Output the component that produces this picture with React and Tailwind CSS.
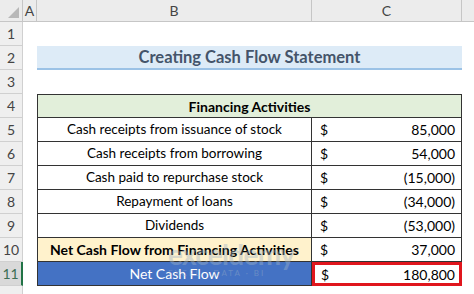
import React from 'react';

const rows = [
  { label: 'Cash receipts from issuance of stock', value: '85,000' },
  { label: 'Cash receipts from borrowing', value: '54,000' },
  { label: 'Cash paid to repurchase stock', value: '(15,000)' },
  { label: 'Repayment of loans', value: '(34,000)' },
  { label: 'Dividends', value: '(53,000)' },
];

const RowHead = ({ n, active }) => (
  <div
    className={`flex items-center justify-center border-b border-r border-[#d0d0d0] text-[14px] ${
      active ? 'bg-[#d9d9d9] text-[#3d6f54] border-r-2 border-r-[#217346]' : 'bg-[#efefef] text-[#444]'
    }`}
  >
    {n}
  </div>
);

const Blank = () => <div className="bg-white" />;

const App = () => {
  return (
    <div
      className="w-[474px] h-[294px] overflow-hidden bg-white relative"
      style={{ fontFamily: 'Lato, "Open Sans", sans-serif' }}
    >
      <div className="grid grid-cols-[23px_14px_275px_150px_1fr] grid-rows-[22px_repeat(11,24px)_1fr] h-full">
        {/* column headers */}
        <div className="bg-[#ececec] border-b border-r border-[#c6c6c6] relative">
          <svg className="absolute right-[3px] bottom-[3px]" width="11" height="11" viewBox="0 0 11 11">
            <polygon points="11,0 11,11 0,11" fill="#b8b8b8" />
          </svg>
        </div>
        <div className="bg-[#ececec] border-b border-r border-[#c6c6c6] flex items-center justify-center text-[14px] text-[#444]">A</div>
        <div className="bg-[#ececec] border-b border-r border-[#c6c6c6] flex items-center justify-center text-[14px] text-[#444]">B</div>
        <div className="bg-[#ececec] border-b border-r border-[#c6c6c6] flex items-center justify-center text-[14px] text-[#444]">C</div>
        <div className="bg-[#ececec] border-b border-[#c6c6c6]" />

        {/* row 1 */}
        <RowHead n="1" />
        <Blank />
        <Blank />
        <Blank />
        <Blank />

        {/* row 2 title */}
        <RowHead n="2" />
        <Blank />
        <div className="col-span-2 bg-[#ddebf7] border-b-2 border-[#9bc2e6] flex items-center justify-center text-[16.5px] font-bold text-[#44546a]">
          Creating Cash Flow Statement
        </div>
        <Blank />

        {/* row 3 */}
        <RowHead n="3" />
        <Blank />
        <Blank />
        <Blank />
        <Blank />

        {/* row 4 header */}
        <RowHead n="4" />
        <Blank />
        <div className="col-span-2 bg-[#e2efda] border border-[#333] flex items-center justify-center text-[14px] font-bold text-black">
          Financing Activities
        </div>
        <Blank />

        {rows.map((r, i) => (
          <React.Fragment key={r.label}>
            <RowHead n={String(i + 5)} />
            <Blank />
            <div className="bg-white border-x border-b border-[#333] flex items-center justify-center text-[13.5px] text-black">
              {r.label}
            </div>
            <div className="bg-white border-r border-b border-[#333] flex items-center justify-between pl-[8px] pr-[6px] text-[14px] text-black">
              <span>$</span>
              <span>{r.value}</span>
            </div>
            <Blank />
          </React.Fragment>
        ))}

        {/* row 10 */}
        <RowHead n="10" />
        <Blank />
        <div className="bg-[#fff2cc] border-x border-b border-[#333] flex items-center justify-center text-[14px] font-bold text-black">
          Net Cash Flow from Financing Activities
        </div>
        <div className="bg-white border-r border-b border-[#333] flex items-center justify-between pl-[8px] pr-[6px] text-[14px] text-black">
          <span>$</span>
          <span>37,000</span>
        </div>
        <Blank />

        {/* row 11 */}
        <RowHead n="11" active />
        <Blank />
        <div className="bg-[#4472c4] border-x border-b border-[#333] flex items-center justify-center text-[14px] text-white">
          Net Cash Flow
        </div>
        <div className="bg-white border-[3px] border-[#e0161d] shadow-[2px_2px_3px_rgba(0,0,0,0.35)] flex items-center justify-between pl-[6px] pr-[4px] text-[14px] text-black">
          <span>$</span>
          <span>180,800</span>
        </div>
        <Blank />

        {/* row 12 partial */}
        <div className="bg-[#efefef] border-r border-[#d0d0d0]" />
        <Blank />
        <Blank />
        <Blank />
        <Blank />
      </div>

      {/* watermark */}
      <div className="absolute left-[168px] top-[240px] pointer-events-none select-none flex flex-col items-start leading-none opacity-40">
        <span className="text-[28px] font-bold text-[#9fb3c8] tracking-tight">exceldemy</span>
        <span className="text-[8px] text-[#9fb3c8] tracking-[2px] mt-[1px]">EXCEL · DATA · BI</span>
      </div>
    </div>
  );
};

export default App;
